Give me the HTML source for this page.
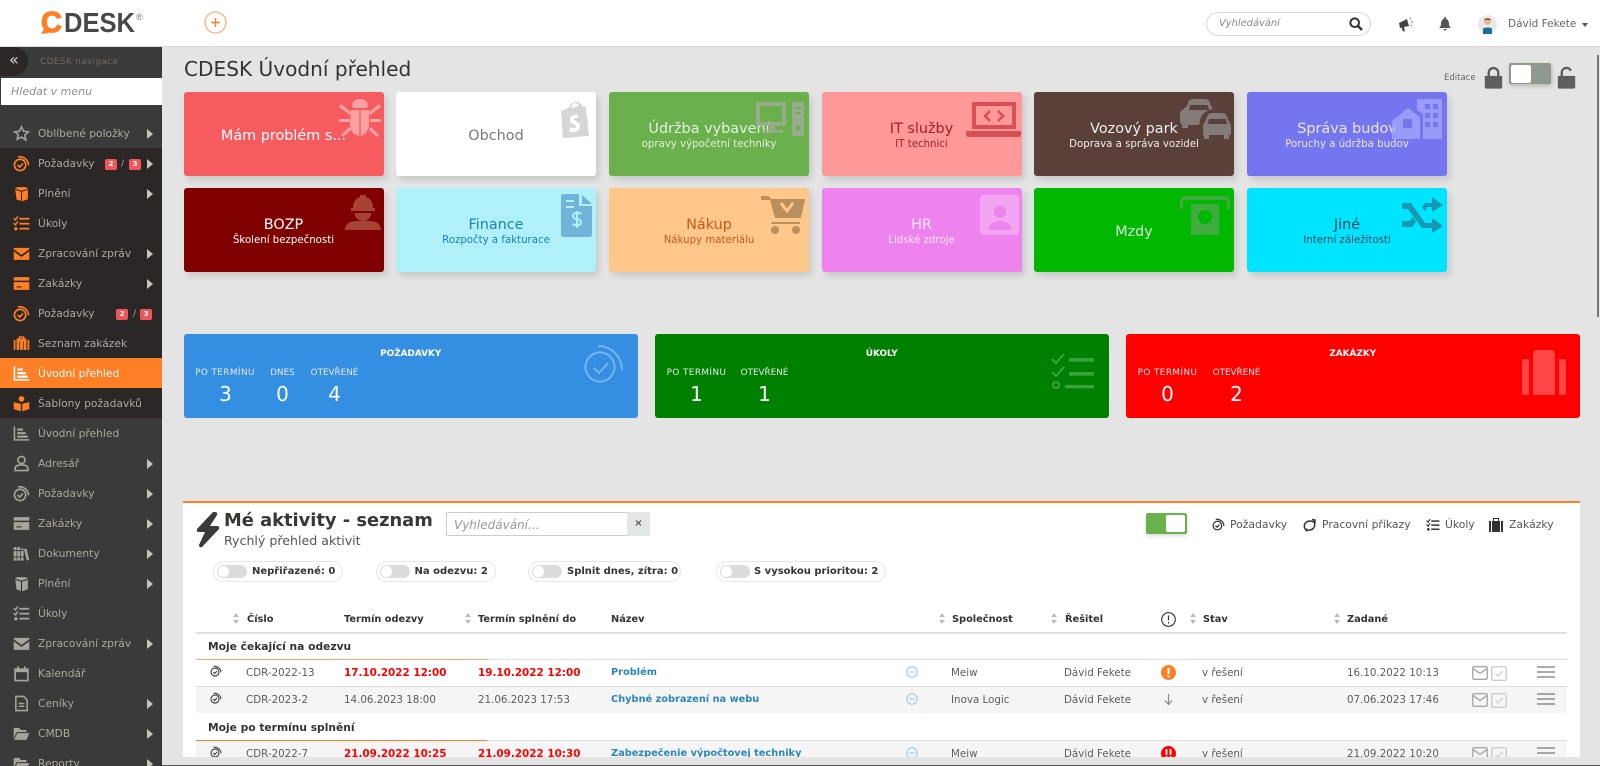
<!DOCTYPE html>
<html lang="cs"><head><meta charset="utf-8"><title>CDESK</title>
<style>
html,body{margin:0;padding:0;width:1600px;height:766px;overflow:hidden;background:#e4e4e4;font-family:"DejaVu Sans","Liberation Sans",sans-serif;color:#555}
.a{position:absolute}
.t{position:absolute;line-height:0;white-space:nowrap}
svg{position:absolute;overflow:visible}
#top{left:0;top:0;width:1600px;height:46px;background:#fff;border-bottom:1px solid #d8d8d8}
#side{left:0;top:47px;width:162px;height:719px;background:#3a3a3a;overflow:hidden}
#dk{left:0;top:101px;width:162px;height:270px;background:#2b2727}
#act{left:0;top:311px;width:162px;height:30px;background:#ff7f27}
.m{position:absolute;left:38px;line-height:0;white-space:nowrap;font-size:10.7px;color:#aaa89f}
.mi{left:13px;width:17px;height:17px}
.ar{position:absolute;left:147px;width:0;height:0;border-left:6px solid #c5c5ba;border-top:5px solid transparent;border-bottom:5px solid transparent}
.b{position:absolute;width:12px;height:11px;background:#f0555a;border-radius:2px;color:#fff;font-size:7px;font-weight:bold;line-height:11px;text-align:center}
.card{position:absolute;width:200px;height:84px;border-radius:3px;box-shadow:3px 4px 7px rgba(0,0,0,.12);text-align:center}
.card .h,.card .s{position:absolute;left:0;right:0;line-height:0;white-space:nowrap;margin-top:1px}
.card .h{font-size:14.4px}.card .s{font-size:10.2px}
.card svg{mask:radial-gradient(circle,#000 62%,transparent 64%) 0 0/2px 2px;-webkit-mask:radial-gradient(circle,#000 62%,transparent 64%) 0 0/2px 2px}
.st{position:absolute;top:334px;width:454.5px;height:84px;border-radius:3px;color:#fff}
.st .ti{position:absolute;left:0;right:0;top:20px;line-height:0;text-align:center;font-size:8.9px;font-weight:bold}
.st .l{position:absolute;top:39px;line-height:0;font-size:8.8px;white-space:nowrap;color:#e8e8e8;transform:translateX(-50%)}
.st .l.w{letter-spacing:.45px}
.st .n{position:absolute;top:60px;line-height:0;font-size:20px;transform:translateX(-50%)}
.st svg{mask:radial-gradient(circle,#000 62%,transparent 64%) 0 0/2px 2px;-webkit-mask:radial-gradient(circle,#000 62%,transparent 64%) 0 0/2px 2px}
#panel{left:183px;top:501px;width:1397px;height:256px;background:#fff;border-top:2px solid #ff7f27;box-sizing:border-box}
.th{position:absolute;top:620px;line-height:0;font-size:9.8px;font-weight:bold;color:#333;white-space:nowrap}
.so{position:absolute;width:7px;height:11px}
.so:before,.so:after{content:"";position:absolute;left:0;border-left:3.5px solid transparent;border-right:3.5px solid transparent}
.so:before{top:0;border-bottom:4.5px solid #bbb}.so:after{bottom:0;border-top:4.5px solid #bbb}
.r{position:absolute;line-height:0;font-size:10.3px;color:#5c5c5c;white-space:nowrap;margin-top:1px}
.red{color:#f00;font-weight:bold;font-size:10.4px}
.lnk{color:#2a86bb;font-weight:bold;font-size:9.8px}
.gr{position:absolute;line-height:0;font-size:10.7px;font-weight:bold;color:#333;left:208px;white-space:nowrap;margin-top:1px}
.pill{position:absolute;top:561px;height:19px;border:1px solid #e6e6e6;border-radius:11px;background:#fff}
.tg{position:absolute;left:3px;top:3px;width:30px;height:13px;border-radius:7px;background:#dcdcdc}
.tg:before{content:"";position:absolute;left:0;top:0;width:13px;height:13px;border-radius:50%;background:#fff;border:1px solid #ddd;box-sizing:border-box}
.pl{position:absolute;top:572px;line-height:0;font-size:10px;font-weight:bold;color:#333;white-space:nowrap}
.li{position:absolute;line-height:0;font-size:10.8px;color:#555;top:525px;white-space:nowrap}
</style></head><body>
<svg width="0" height="0" style="position:absolute"><defs>
<symbol id="i-star" viewBox="0 0 24 24"><path d="M12 2.5l2.9 6.3 6.9.8-5.1 4.7 1.4 6.8L12 17l-6.1 3.1 1.4-6.8L2.200 9.600l6.900-.8z" fill="none" stroke="currentColor" stroke-width="2.200"/></symbol>
<symbol id="i-req" viewBox="0 0 24 24"><g fill="none" stroke="currentColor" stroke-width="2.300"><circle cx="10" cy="14" r="8"/><path d="M7 2.500a13 13 0 0 1 15 12M6.500 14l3 3 4.500-5"/></g></symbol>
<symbol id="i-box" viewBox="0 0 24 24"><path d="M6 3h12l3 2v15l-8 3-8-2.500L3 5z" fill="currentColor"/><path d="M3.500 6l8.500 3 8.500-3M12 9v14" stroke="#2b2727" stroke-width="1.400" fill="none"/></symbol>
<symbol id="i-list" viewBox="0 0 24 24"><g fill="currentColor"><rect x="9" y="4" width="14" height="2.500"/><rect x="9" y="11" width="14" height="2.500"/><rect x="9" y="18" width="14" height="2.500"/><circle cx="4" cy="19.500" r="2.300"/></g><path d="M1 4.500l2.500 2.500L7 2M1 11.500l2.500 2.500L7 9" fill="none" stroke="currentColor" stroke-width="2"/></symbol>
<symbol id="i-mail" viewBox="0 0 24 24"><path d="M1 4h22v2L12 14 1 6zM1 9l11 8 11-8v12H1z" fill="currentColor"/></symbol>
<symbol id="i-card" viewBox="0 0 24 24"><path d="M1 3h22v5H1zM1 10h22v11H1z" fill="currentColor"/><path d="M5 16h7v1.500H5z" fill="#2b2727"/></symbol>
<symbol id="i-bag" viewBox="0 0 24 24"><path d="M8 2h8v3h3v16H5V5h3zM10 4v1h4V4zM1 7h2.500v14H1zM20.500 7H23v14h-2.500z" fill="currentColor"/><path d="M9.500 9v12M14.500 9v12" stroke="#2b2727" stroke-width="1"/></symbol>
<symbol id="i-chart" viewBox="0 0 24 24"><path d="M2 2v19h21" fill="none" stroke="currentColor" stroke-width="2.200"/><path d="M6 5h8v3H6zM6 10h12v3H6zM6 15h15v3H6z" fill="currentColor"/></symbol>
<symbol id="i-book" viewBox="0 0 24 24"><circle cx="12" cy="5.500" r="4" fill="currentColor"/><path d="M1 10l10 2.500V23L1 20zM23 10l-10 2.500V23l10-3z" fill="currentColor"/></symbol>
<symbol id="i-user" viewBox="0 0 24 24"><g fill="none" stroke="currentColor" stroke-width="2.300"><circle cx="12" cy="7" r="5"/><path d="M3 22v-3c0-3 3-5 9-5s9 2 9 5v3z"/></g></symbol>
<symbol id="i-books" viewBox="0 0 24 24"><path d="M1 3h4v19H1zM6 3h4v19H6zM11 5h4v17h-4zM15.500 6l3.500-1 4 16-3.500 1z" fill="currentColor"/><path d="M1 8h14M1 17h14" stroke="#3a3a3a" stroke-width="1.400"/></symbol>
<symbol id="i-cal" viewBox="0 0 24 24"><path d="M3 6h18v16H3z" fill="none" stroke="currentColor" stroke-width="2.400"/><path d="M3 5h18v5H3zM6 2h2.500v4H6zM15.500 2H18v4h-2.500z" fill="currentColor"/></symbol>
<symbol id="i-doc" viewBox="0 0 24 24"><path d="M4 2h11l5 5v15H4z" fill="none" stroke="currentColor" stroke-width="2.200"/><path d="M8 12h8M8 16h8" stroke="currentColor" stroke-width="2"/></symbol>
<symbol id="i-folder" viewBox="0 0 24 24"><path d="M1 4h8l2 3h8v3H5L1 19zM6 11.500h17L19 21H1.500z" fill="currentColor"/></symbol>
<symbol id="i-lock" viewBox="0 0 24 28"><path d="M1 12h22v14a2 2 0 0 1-2 2H3a2 2 0 0 1-2-2z" fill="currentColor"/><path d="M6 13V8a6 6 0 0 1 12 0v5" fill="none" stroke="currentColor" stroke-width="3"/></symbol>
<symbol id="i-unlock" viewBox="0 0 24 28"><path d="M1 12h22v14a2 2 0 0 1-2 2H3a2 2 0 0 1-2-2z" fill="currentColor"/><path d="M6 13V8a6 6 0 0 1 11.500-2.500" fill="none" stroke="currentColor" stroke-width="3"/></symbol>
<symbol id="i-env" viewBox="0 0 16 14"><rect x=".7" y=".7" width="14.600" height="12.600" rx="1.500" fill="none" stroke="#aaa" stroke-width="1.400"/><path d="M1 2.500l7 5 7-5" fill="none" stroke="#aaa" stroke-width="1.400"/></symbol>
<symbol id="i-chk" viewBox="0 0 16 15"><rect x=".7" y=".7" width="14.600" height="13.600" rx="1.500" fill="none" stroke="#ccc" stroke-width="1.400"/><path d="M4.500 7.500l2.500 2.500 4.500-5" fill="none" stroke="#ccc" stroke-width="1.200"/></symbol>
<symbol id="i-ham" viewBox="0 0 18 12"><path d="M0 1h18M0 6h18M0 11h18" stroke="#777" stroke-width="1.300"/></symbol>
<symbol id="i-dots" viewBox="0 0 12 12"><circle cx="6" cy="6" r="5.200" fill="none" stroke="#8cc6e8" stroke-width="1"/><path d="M3.500 6h1M5.500 6h1M7.500 6h1" stroke="#5a9cc4" stroke-width="1"/></symbol>
</defs></svg>

<div class="a" id="top"></div>
<svg style="left:38px;top:6px" width="110" height="32"><path d="M6 23l-3 5 8-1z" fill="#ff7f27"/><text x="3" y="26" font-family="Liberation Sans" font-weight="bold" font-size="29" fill="#ff7f27" stroke="#ff7f27" stroke-width="1.200">C</text><text x="26" y="26" font-family="Liberation Sans" font-weight="bold" font-size="28" fill="#484848" textLength="71" lengthAdjust="spacingAndGlyphs">DESK</text><text x="98" y="14" font-family="Liberation Sans" font-size="9" fill="#777">®</text></svg>
<svg style="left:204px;top:11px" width="23" height="23"><circle cx="11.500" cy="11.500" r="10.500" fill="#fff" stroke="#f7b27a" stroke-width="1.300"/><path d="M7 11.500h9M11.500 7v9" stroke="#ff7f27" stroke-width="1.400"/></svg>
<div class="a" style="left:1206px;top:12px;width:165px;height:24px;border:1px solid #d8d8d8;border-radius:13px;box-sizing:border-box;background:#fff"></div>
<div class="t" style="left:1219px;top:24px;font-size:9.9px;font-style:italic;color:#888">Vyhledávání</div>
<svg style="left:1349px;top:17px" width="14" height="14" viewBox="0 0 14 14"><circle cx="5.700" cy="5.700" r="4.300" fill="none" stroke="#333" stroke-width="2"/><path d="M9 9l4 4" stroke="#333" stroke-width="2.400"/></svg>
<svg style="left:1398px;top:16px" width="16" height="16" viewBox="0 0 16 16"><path d="M1 7l8-4 2 7-5 1 1 4-2 .5-1.500-4L2 12z" fill="#444"/><path d="M12 3l1-1.500M13 6h2M12.500 9l1.500 1" stroke="#777" stroke-width="1"/></svg>
<svg style="left:1439px;top:17px" width="12" height="15" viewBox="0 0 12 15"><path d="M6 0a1.300 1.300 0 0 1 1 2c2.500 .6 3 3 3 5s1 3 2 4H0c1-1 2-2 2-4s.5-4.400 3-5a1.300 1.300 0 0 1 1-2zM4.500 12h3a1.500 1.500 0 0 1-3 0z" fill="#555"/></svg>
<svg style="left:1478px;top:15px" width="19" height="19" viewBox="0 0 19 19"><circle cx="9.500" cy="9.500" r="9.500" fill="#e9e9e9"/><circle cx="9.500" cy="6.500" r="3.300" fill="#e9b48e"/><path d="M6 5.500c0-3 7-3 7 0-2-1-5-1-7 0z" fill="#7b3f20"/><path d="M5 19v-5c0-2 9-2 9 0v5z" fill="#1a6f94"/></svg>
<div class="t" style="left:1508px;top:24px;font-size:10.500px;color:#666">Dávid Fekete</div>
<div class="a" style="left:1582px;top:23px;width:0;height:0;border-left:3.500px solid transparent;border-right:3.500px solid transparent;border-top:4px solid #555"></div>

<div class="a" id="side">
<div class="a" id="dk"></div><div class="a" id="act"></div>
<div class="a" style="left:0;top:0;width:28px;height:29px;background:#2b2727;border-radius:0 14px 14px 0"></div>
<div class="t" style="left:9px;top:13px;font-size:16px;color:#ddd">«</div>
<div class="t" style="left:40px;top:15px;font-size:9px;color:#6f6a66;letter-spacing:.3px">CDESK navigace</div>
<div class="a" style="left:1px;top:31px;width:161px;height:27px;background:#fff"></div>
<div class="t" style="left:11px;top:45px;font-size:11px;font-style:italic;color:#8f8f8f">Hledat v menu</div>
<div class="m" style="top:87px">Oblíbené položky</div><i class="ar" style="top:82px"></i>
<div class="m" style="top:117px">Požadavky</div><i class="ar" style="top:112px"></i>
<div class="b" style="left:105px;top:112px">2</div><div class="t" style="left:121px;top:117px;font-size:9px;color:#aaa">/</div><div class="b" style="left:129px;top:112px">3</div>
<div class="m" style="top:147px">Plnění</div><i class="ar" style="top:142px"></i>
<div class="m" style="top:177px">Úkoly</div>
<div class="m" style="top:207px">Zpracování zpráv</div><i class="ar" style="top:202px"></i>
<div class="m" style="top:237px">Zakázky</div><i class="ar" style="top:232px"></i>
<div class="m" style="top:267px">Požadavky</div>
<div class="b" style="left:116px;top:262px">2</div><div class="t" style="left:133px;top:267px;font-size:9px;color:#aaa">/</div><div class="b" style="left:140px;top:262px">3</div>
<div class="m" style="top:297px">Seznam zakázek</div>
<div class="m" style="top:327px;color:#fff">Úvodní přehled</div>
<div class="m" style="top:357px">Šablony požadavků</div>
<div class="m" style="top:387px">Úvodní přehled</div>
<div class="m" style="top:417px">Adresář</div><i class="ar" style="top:412px"></i>
<div class="m" style="top:447px">Požadavky</div><i class="ar" style="top:442px"></i>
<div class="m" style="top:477px">Zakázky</div><i class="ar" style="top:472px"></i>
<div class="m" style="top:507px">Dokumenty</div><i class="ar" style="top:502px"></i>
<div class="m" style="top:537px">Plnění</div><i class="ar" style="top:532px"></i>
<div class="m" style="top:567px">Úkoly</div>
<div class="m" style="top:597px">Zpracování zpráv</div><i class="ar" style="top:592px"></i>
<div class="m" style="top:627px">Kalendář</div>
<div class="m" style="top:657px">Ceníky</div><i class="ar" style="top:652px"></i>
<div class="m" style="top:687px">CMDB</div><i class="ar" style="top:682px"></i>
<div class="m" style="top:717px">Reporty</div><i class="ar" style="top:712px"></i>
<svg class="mi" style="top:78px;color:#a5a59c"><use href="#i-star"/></svg>
<svg class="mi" style="top:108px;color:#ff7f27"><use href="#i-req"/></svg>
<svg class="mi" style="top:138px;color:#ff7f27"><use href="#i-box"/></svg>
<svg class="mi" style="top:168px;color:#ff7f27"><use href="#i-list"/></svg>
<svg class="mi" style="top:198px;color:#ff7f27"><use href="#i-mail"/></svg>
<svg class="mi" style="top:228px;color:#ff7f27"><use href="#i-card"/></svg>
<svg class="mi" style="top:258px;color:#ff7f27"><use href="#i-req"/></svg>
<svg class="mi" style="top:288px;color:#ff7f27"><use href="#i-bag"/></svg>
<svg class="mi" style="top:318px;color:#fff"><use href="#i-chart"/></svg>
<svg class="mi" style="top:348px;color:#ff7f27"><use href="#i-book"/></svg>
<svg class="mi" style="top:378px;color:#a5a59c"><use href="#i-chart"/></svg>
<svg class="mi" style="top:408px;color:#a5a59c"><use href="#i-user"/></svg>
<svg class="mi" style="top:438px;color:#a5a59c"><use href="#i-req"/></svg>
<svg class="mi" style="top:468px;color:#a5a59c"><use href="#i-card"/></svg>
<svg class="mi" style="top:498px;color:#a5a59c"><use href="#i-books"/></svg>
<svg class="mi" style="top:528px;color:#a5a59c"><use href="#i-box"/></svg>
<svg class="mi" style="top:558px;color:#a5a59c"><use href="#i-list"/></svg>
<svg class="mi" style="top:588px;color:#a5a59c"><use href="#i-mail"/></svg>
<svg class="mi" style="top:618px;color:#a5a59c"><use href="#i-cal"/></svg>
<svg class="mi" style="top:648px;color:#a5a59c"><use href="#i-doc"/></svg>
<svg class="mi" style="top:678px;color:#a5a59c"><use href="#i-folder"/></svg>
<svg class="mi" style="top:708px;color:#a5a59c"><use href="#i-folder"/></svg>
</div>

<div class="t" style="left:184px;top:69px;font-size:20.1px;color:#333">CDESK Úvodní přehled</div>
<div class="t" style="left:1444px;top:78px;font-size:8.5px;color:#666">Editace</div>
<svg style="left:1484px;top:66px;color:#5e5e5e" width="19" height="23"><use href="#i-lock"/></svg>
<div class="a" style="left:1509px;top:63px;width:42px;height:21px;background:#8f9a8c;border-radius:2px;box-shadow:1px 2px 4px rgba(0,0,0,.2)"></div>
<div class="a" style="left:1511px;top:65px;width:20px;height:18px;background:#fff;border-radius:2px"></div>
<svg style="left:1557px;top:66px;color:#5e5e5e" width="19" height="23"><use href="#i-unlock"/></svg>
<div class="a" style="left:1597px;top:55px;width:2px;height:262px;background:#777"></div>

<!-- cards row 1 -->
<div class="card" style="left:183.500px;top:92px;background:#f55b5f;color:#fff"><div class="h" style="top:43px">Mám problém s...</div>
<svg style="left:155px;top:5px;color:#fbb8ba" width="42" height="42" viewBox="0 0 42 42"><path d="M13 8a8 6 0 0 1 16 0l-1 3H14zM12 13h8.500v26C14 38 11 33 11 27zM21.500 13H30v14c0 6-3 11-8.500 12zM2 7l10 8-1 3L0 10zM40 7L30 15l1 3 11-8zM0 22h11v3H0zM42 22H31v3h11zM10 30l-8 8 2 2 8-7zM32 30l8 8-2 2-8-7z" fill="currentColor"/></svg></div>
<div class="card" style="left:396px;top:92px;background:#fff;color:#777"><div class="h" style="top:43px">Obchod</div>
<svg style="left:162px;top:10px;color:#c8c8c8" width="36" height="36" viewBox="0 0 36 36"><path d="M3 9l8-3c1-4 4-6 7-6s5 1 6 4l4 1 3 29-26 2zM13 6l8-2c-1-2-2-3-4-3-2 1-4 3-4 5zM20 13c-4-1-8 1-8 5 0 4 6 4 6 7 0 1-3 2-6 0l-1 4c5 2 11 1 11-5 0-4-6-5-6-7 0-1 2-1 4-1z" fill="currentColor" fill-rule="evenodd"/></svg></div>
<div class="card" style="left:609px;top:92px;background:#6ab04c;color:#e4efe0"><div class="h" style="top:36px">Údržba vybavení</div><div class="s" style="top:52px">opravy výpočetní techniky</div>
<svg style="left:146px;top:9px;color:#a6aaa2" width="50" height="36" viewBox="0 0 50 36"><path d="M1 1h30v24H20v4h8v3H7v-3h8v-4H1zM5 5v16h22V5z" fill="currentColor" fill-rule="evenodd"/><path d="M37 1h12v34H37z" fill="currentColor"/><path d="M40 7h6M40 12h6" stroke="#6ab04c" stroke-width="2"/><circle cx="43" cy="27" r="2.500" fill="#6ab04c"/></svg></div>
<div class="card" style="left:821.500px;top:92px;background:#ff9999;color:#a32026"><div class="h" style="top:36px">IT služby</div><div class="s" style="top:52px">IT technici</div>
<svg style="left:144px;top:9px;color:#c9383e" width="55" height="36" viewBox="0 0 55 36"><path d="M6 1h44v27H6zM10 5v19h36V5zM0 30h55v3c0 2-1 3-3 3H3c-2 0-3-1-3-3z" fill="currentColor" fill-rule="evenodd"/><path d="M24 10l-5 5 5 5M32 10l5 5-5 5" fill="none" stroke="currentColor" stroke-width="2.500"/></svg></div>
<div class="card" style="left:1034px;top:92px;background:#5a4038;color:#eee"><div class="h" style="top:36px">Vozový park</div><div class="s" style="top:52px">Doprava a správa vozidel</div>
<svg style="left:146px;top:6px;color:#8f8f8f" width="51" height="41" viewBox="0 0 51 41"><path d="M7 8C8 3 10 1 13 1h12c3 0 5 2 6 7l2 3c-6 1-10 4-12 8l-2 8H8v3H2v-3L0 24V14zM10 7l-1 5h20l-1-5zM26 22c1-5 3-7 6-7h10c3 0 5 2 6 7l3 5v10h-2v4h-5v-4H29v4h-5v-4h-1V27zM29 21l-1 5h19l-1-5z" fill="currentColor" fill-rule="evenodd"/></svg></div>
<div class="card" style="left:1247px;top:92px;background:#7575f0;color:#e6e6ff"><div class="h" style="top:36px">Správa budov</div><div class="s" style="top:52px">Poruchy a údržba budov</div>
<svg style="left:145px;top:7px;color:#a6a8f8" width="50" height="40" viewBox="0 0 50 40"><path d="M0 22L16 9l12 9v22H0zM11 20v9h9v-9zM25 0h25v40H31V15l-6-4zM33 5v5h5V5zM41 5v5h5V5zM33 14v5h5v-5zM41 14v5h5v-5zM33 23v5h5v-5zM41 23v5h5v-5z" fill="currentColor" fill-rule="evenodd"/></svg></div>
<!-- cards row 2 -->
<div class="card" style="left:183.500px;top:188px;background:#800000;color:#fff"><div class="h" style="top:36px">BOZP</div><div class="s" style="top:52px">Školení bezpečnosti</div>
<svg style="left:161px;top:6px;color:#b35a45" width="36" height="36" viewBox="0 0 36 36"><path d="M8 14C8 8 11 4 15 3V1h6v2c4 1 7 5 7 11h2v3H6v-3zM10 19h16c0 5-3 8-8 8s-8-3-8-8zM0 36c0-6 5-9 11-9h14c6 0 11 3 11 9z" fill="currentColor"/></svg></div>
<div class="card" style="left:396px;top:188px;background:#b0f0f8;color:#1f83a8"><div class="h" style="top:36px">Finance</div><div class="s" style="top:52px">Rozpočty a fakturace</div>
<svg style="left:165px;top:6px;color:#5d9fd0" width="31" height="43" viewBox="0 0 31 43"><path d="M3 0h15v12h13v28c0 2-1 3-3 3H3c-2 0-3-1-3-3V3c0-2 1-3 3-3zM21 1l10 9H21z" fill="currentColor"/><path d="M5 7h8M5 13h8M20 20c-2-2-8-2-8 2s8 2 8 6-6 4-8 2M16 17v17" fill="none" stroke="#b0f0f8" stroke-width="2"/></svg></div>
<div class="card" style="left:609px;top:188px;background:#ffc78a;color:#c65a1e"><div class="h" style="top:36px">Nákup</div><div class="s" style="top:52px">Nákupy materiálu</div>
<svg style="left:152px;top:7px;color:#a27d4e" width="44" height="40" viewBox="0 0 44 40"><path d="M0 1h8l2 3h34l-4 19H14L9 5H0z" fill="currentColor"/><path d="M11 27h28v2H10z" fill="currentColor"/><circle cx="14" cy="35" r="4" fill="currentColor"/><circle cx="35" cy="35" r="4" fill="currentColor"/><path d="M20 8l6 8 6-8" fill="none" stroke="#ffc78a" stroke-width="3"/></svg></div>
<div class="card" style="left:821.500px;top:188px;background:#ee82ee;color:#fbe6fb"><div class="h" style="top:36px">HR</div><div class="s" style="top:52px">Lidské zdroje</div>
<div class="a" style="left:158px;top:7px;width:39px;height:40px;background:#f2a6f2;border-radius:4px"></div>
<svg style="left:165px;top:18px;mask:none;-webkit-mask:none;color:#ee82ee" width="26" height="24" viewBox="0 0 26 24"><circle cx="13" cy="6" r="6" fill="currentColor"/><path d="M2 24c0-6 4-9 11-9s11 3 11 9z" fill="currentColor"/></svg></div>
<div class="card" style="left:1034px;top:188px;background:#00b800;color:#d6f4d6"><div class="h" style="top:43px">Mzdy</div>
<svg style="left:146px;top:7px;color:#55a855" width="50" height="40" viewBox="0 0 50 40"><path d="M0 14V6c0-3 2-5 5-5h40c3 0 5 2 5 5v8h-3V8c0-2-1-3-3-3H6C4 5 3 6 3 8v6zM11 9h28v31H11z" fill="currentColor"/><circle cx="25" cy="22" r="7" fill="#00b800"/></svg></div>
<div class="card" style="left:1247px;top:188px;background:#00e5ff;color:#17465c"><div class="h" style="top:36px">Jiné</div><div class="s" style="top:52px">Interní záležitosti</div>
<svg style="left:155px;top:8px;color:#1d7f9c" width="41" height="37" viewBox="0 0 41 37"><path d="M0 7h9l14 20h7v-5l11 8-11 7v-5H20L6 13H0zM0 25h8l3-4 3 5-4 5H0zM20 11l3-4h7V1l11 8-11 7v-5h-5l-2 4z" fill="currentColor"/></svg></div>

<!-- stat panels -->
<div class="st" style="left:183.500px;background:#348fe2"><div class="ti">POŽADAVKY</div>
<div class="l w" style="left:41.500px">PO TERMÍNU</div><div class="n" style="left:42px">3</div>
<div class="l" style="left:99px">DNES</div><div class="n" style="left:99px">0</div>
<div class="l" style="left:151px">OTEVŘENÉ</div><div class="n" style="left:151px">4</div>
<svg style="left:400px;top:9px;color:#8cc0f0" width="40" height="40" viewBox="0 0 40 40"><g fill="none" stroke="currentColor" stroke-width="2"><circle cx="16" cy="24" r="14.500"/><path d="M14 3a24 24 0 0 1 24 24M10 25l5 5 9-10"/></g></svg></div>
<div class="st" style="left:654.500px;background:#008000"><div class="ti">ÚKOLY</div>
<div class="l w" style="left:42px">PO TERMÍNU</div><div class="n" style="left:42px">1</div>
<div class="l" style="left:110px">OTEVŘENÉ</div><div class="n" style="left:110px">1</div>
<svg style="left:396px;top:18px;color:#4fae4f" width="44" height="38" viewBox="0 0 44 38"><path d="M1 7l4 4 8-9M1 20l4 4 8-9" fill="none" stroke="currentColor" stroke-width="2"/><circle cx="5" cy="33" r="3" fill="none" stroke="currentColor" stroke-width="2"/><path d="M18 6h25v3.500H18zM18 20h25v3.500H18zM14 33h29v3.500H14z" fill="currentColor"/></svg></div>
<div class="st" style="left:1125.500px;background:#f00"><div class="ti">ZAKÁZKY</div>
<div class="l w" style="left:42px">PO TERMÍNU</div><div class="n" style="left:42px">0</div>
<div class="l" style="left:111px">OTEVŘENÉ</div><div class="n" style="left:111px">2</div>
<svg style="left:396px;top:15px;color:#ff5c5c" width="44" height="46" viewBox="0 0 44 46"><path d="M11 4l2-3h18l2 3v42H11zM0 12q0-2 3-2h4v36H3q-3 0-3-2zM37 10h4q3 0 3 2v32q0 2-3 2h-4z" fill="currentColor"/></svg></div>

<!-- activities panel -->
<div class="a" id="panel"></div>
<svg style="left:196px;top:512px;color:#3a3a3a" width="24" height="36" viewBox="0 0 24 36"><path d="M17 0L1 17Q0 20 3 20H9L3 33Q3 36 6 35L23 17Q24 14 21 14H14L21 3Q22 0 19 0z" fill="currentColor"/></svg>
<div class="t" style="left:224px;top:521px;font-size:17.85px;font-weight:bold;color:#3a3636">Mé aktivity - seznam</div>
<div class="t" style="left:224px;top:541px;font-size:12.6px;color:#555">Rychlý přehled aktivit</div>
<div class="a" style="left:445.500px;top:512px;width:182px;height:24px;border:1px solid #ccc;border-right:0;box-sizing:border-box;background:#fff;border-radius:2px 0 0 2px"></div>
<div class="t" style="left:454px;top:525px;font-size:12px;font-style:italic;color:#999">Vyhledávání...</div>
<div class="a" style="left:627px;top:512px;width:23px;height:24px;background:#e2e6e6;text-align:center;font-size:10px;line-height:24px;color:#555;font-weight:bold;border-radius:0 2px 2px 0">×</div>

<div class="pill" style="left:212.500px;width:128px"><div class="tg"></div></div><div class="pl" style="left:252px">Nepřiřazené: 0</div>
<div class="pill" style="left:375.500px;width:118px"><div class="tg"></div></div><div class="pl" style="left:414.500px">Na odezvu: 2</div>
<div class="pill" style="left:528px;width:151px"><div class="tg"></div></div><div class="pl" style="left:567px">Splnit dnes, zítra: 0</div>
<div class="pill" style="left:716px;width:168px"><div class="tg"></div></div><div class="pl" style="left:754px">S vysokou prioritou: 2</div>

<div class="a" style="left:1146px;top:513px;width:41px;height:21px;background:#6ab04c;border-radius:2px;box-shadow:0 2px 4px rgba(0,0,0,.15)"></div>
<div class="a" style="left:1166px;top:515px;width:19px;height:17px;background:#fff;border-radius:2px"></div>
<svg style="left:1212px;top:518px;color:#333" width="13" height="13"><use href="#i-req"/></svg><div class="li" style="left:1230px">Požadavky</div>
<svg style="left:1303px;top:519px" width="13" height="13" viewBox="0 0 13 13"><path d="M3 11c-3-3-2-8 3-9 2 0 4 .5 5 1M10 2c3 3 2 8-3 9-2 .3-3 0-4 0M9 .5L12 1v3M3.500 9.500v3" fill="none" stroke="#333" stroke-width="1.500"/></svg><div class="li" style="left:1322px">Pracovní příkazy</div>
<svg style="left:1426px;top:518px;color:#333" width="14" height="14"><use href="#i-list"/></svg><div class="li" style="left:1445px">Úkoly</div>
<svg style="left:1489px;top:518px" width="14" height="14" viewBox="0 0 14 14"><path d="M4 0h6v3h1v11H3V3h1zM5 1v2h4V1zM0 3h2v11H0zM12 3h2v11h-2z" fill="#333" fill-rule="evenodd"/></svg><div class="li" style="left:1509px">Zakázky</div>

<i class="so" style="left:233px;top:613px"></i><div class="th" style="left:247px">Číslo</div>
<div class="th" style="left:344px">Termín odezvy</div>
<i class="so" style="left:465px;top:613px"></i><div class="th" style="left:478px">Termín splnění do</div>
<div class="th" style="left:611px">Název</div>
<i class="so" style="left:939px;top:613px"></i><div class="th" style="left:952px">Společnost</div>
<i class="so" style="left:1051px;top:613px"></i><div class="th" style="left:1065px">Řešitel</div>
<svg style="left:1161px;top:612px" width="15" height="15"><circle cx="7.500" cy="7.500" r="6.800" fill="none" stroke="#333" stroke-width="1.100"/><path d="M7.500 3.500v5M7.500 10v1.500" stroke="#333" stroke-width="1.200"/></svg>
<i class="so" style="left:1190px;top:613px"></i><div class="th" style="left:1203px">Stav</div>
<i class="so" style="left:1334px;top:613px"></i><div class="th" style="left:1347px">Zadané</div>

<div class="a" style="left:196px;top:632px;width:1371px;height:2px;background:#e2e2e2"></div>
<div class="gr" style="top:646px">Moje čekající na odezvu</div>
<div class="a" style="left:196px;top:659px;width:1371px;height:1px;background:#dedede"></div>
<div class="a" style="left:196px;top:659px;width:291px;height:1px;background:#f7a56b"></div>
<div class="a" style="left:196px;top:686px;width:1371px;height:1px;background:#dedede"></div>
<div class="a" style="left:196px;top:687px;width:1371px;height:26px;background:#f5f5f5"></div>
<div class="gr" style="top:727px">Moje po termínu splnění</div>
<div class="a" style="left:196px;top:740px;width:291px;height:1px;background:#ff7f27"></div>
<div class="a" style="left:487px;top:740px;width:1080px;height:1px;background:#dedede"></div>
<div class="a" style="left:196px;top:741px;width:1371px;height:16px;background:#f5f5f5"></div>

<svg style="left:210px;top:665px;color:#444" width="12" height="12"><use href="#i-req"/></svg>
<div class="r" style="left:246px;top:672px">CDR-2022-13</div>
<div class="r red" style="left:344px;top:672px">17.10.2022 12:00</div>
<div class="r red" style="left:478px;top:672px">19.10.2022 12:00</div>
<div class="r lnk" style="left:611px;top:672px">Problém</div>
<svg style="left:906px;top:666px" width="12" height="12"><use href="#i-dots"/></svg>
<div class="r" style="left:951px;top:672px">Meiw</div>
<div class="r" style="left:1064px;top:672px">Dávid Fekete</div>
<svg style="left:1161px;top:665px" width="15" height="15"><circle cx="7.500" cy="7.500" r="7.500" fill="#ff7f27"/><path d="M7.500 3v6M7.500 10.300v2" stroke="#fff" stroke-width="2"/></svg>
<div class="r" style="left:1202px;top:672px">v řešení</div>
<div class="r" style="left:1347px;top:672px">16.10.2022 10:13</div>
<svg style="left:1472px;top:666px" width="16" height="14"><use href="#i-env"/></svg>
<svg style="left:1491px;top:666px" width="16" height="15"><use href="#i-chk"/></svg>
<svg style="left:1537px;top:666px" width="18" height="12"><use href="#i-ham"/></svg>

<svg style="left:210px;top:692px;color:#444" width="12" height="12"><use href="#i-req"/></svg>
<div class="r" style="left:246px;top:699px">CDR-2023-2</div>
<div class="r" style="left:344px;top:699px">14.06.2023 18:00</div>
<div class="r" style="left:478px;top:699px">21.06.2023 17:53</div>
<div class="r lnk" style="left:611px;top:699px">Chybné zobrazení na webu</div>
<svg style="left:906px;top:693px" width="12" height="12"><use href="#i-dots"/></svg>
<div class="r" style="left:951px;top:699px">Inova Logic</div>
<div class="r" style="left:1064px;top:699px">Dávid Fekete</div>
<svg style="left:1164px;top:694px" width="9" height="11"><path d="M4.500 0v10M1 6.500l3.500 4 3.500-4" fill="none" stroke="#888" stroke-width="1.200"/></svg>
<div class="r" style="left:1202px;top:699px">v řešení</div>
<div class="r" style="left:1347px;top:699px">07.06.2023 17:46</div>
<svg style="left:1472px;top:693px" width="16" height="14"><use href="#i-env"/></svg>
<svg style="left:1491px;top:693px" width="16" height="15"><use href="#i-chk"/></svg>
<svg style="left:1537px;top:693px" width="18" height="12"><use href="#i-ham"/></svg>

<svg style="left:210px;top:746px;color:#444" width="12" height="12"><use href="#i-req"/></svg>
<div class="r" style="left:246px;top:753px">CDR-2022-7</div>
<div class="r red" style="left:344px;top:753px">21.09.2022 10:25</div>
<div class="r red" style="left:478px;top:753px">21.09.2022 10:30</div>
<div class="r lnk" style="left:611px;top:753px">Zabezpečenie výpočtovej techniky</div>
<svg style="left:906px;top:747px" width="12" height="12"><use href="#i-dots"/></svg>
<div class="r" style="left:951px;top:753px">Meiw</div>
<div class="r" style="left:1064px;top:753px">Dávid Fekete</div>
<svg style="left:1161px;top:746px" width="15" height="15"><circle cx="7.500" cy="7.500" r="7.500" fill="#f00"/><path d="M5.500 3v6M5.500 10.300v2M9.500 3v6M9.500 10.300v2" stroke="#fff" stroke-width="1.800"/></svg>
<div class="r" style="left:1202px;top:753px">v řešení</div>
<div class="r" style="left:1347px;top:753px">21.09.2022 10:20</div>
<svg style="left:1472px;top:747px" width="16" height="14"><use href="#i-env"/></svg>
<svg style="left:1491px;top:747px" width="16" height="15"><use href="#i-chk"/></svg>
<svg style="left:1537px;top:747px" width="18" height="12"><use href="#i-ham"/></svg>

<div class="a" style="left:162px;top:757px;width:1438px;height:8px;background:#e4e4e4"></div>
<div class="a" style="left:162px;top:765px;width:1438px;height:1px;background:#555"></div>
</body></html>
